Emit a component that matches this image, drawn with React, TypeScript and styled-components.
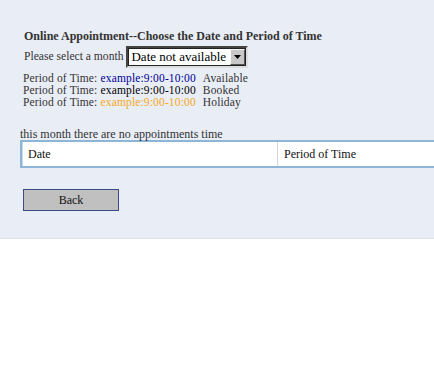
import React from "react";
import styled, { createGlobalStyle } from "styled-components";

const GlobalStyle = createGlobalStyle`
  html, body {
    margin: 0;
    padding: 0;
    background: #ffffff;
    overflow: hidden;
  }
  body {
    font-family: "Liberation Serif", "Times New Roman", serif;
    font-size: 12px;
    color: #333333;
  }
`;

type Status = "available" | "booked" | "holiday";

const LEGEND: { status: Status; label: string }[] = [
  { status: "available", label: "Available" },
  { status: "booked", label: "Booked" },
  { status: "holiday", label: "Holiday" },
];

const STATUS_COLOR: Record<Status, string> = {
  available: "#000099",
  booked: "#000000",
  holiday: "#f4a81c",
};

const Panel = styled.div`
  background: #e9edf5;
  border-bottom: 1px solid #dde2ea;
  padding: 29px 0 27px 20px;
  overflow: hidden;
`;

const Title = styled.h1`
  margin: 0 0 0 4px;
  font-size: 12px;
  line-height: 14px;
  font-weight: bold;
  color: #333333;
`;

const MonthRow = styled.div`
  display: flex;
  align-items: center;
  gap: 3px;
  margin: 3px 0 0 4px;
  line-height: 14px;
  font-size: 11.6px;
`;

const SelectBox = styled.div`
  display: flex;
  align-items: center;
  box-sizing: border-box;
  width: 122px;
  height: 22px;
  background: #ffffff;
  border: 2px solid;
  border-color: #444444 #dddddd #dddddd #444444;
  outline: 1px solid #222222;
  outline-offset: -3px;
`;

const SelectText = styled.span`
  flex: 1;
  padding-left: 3px;
  font-size: 13px;
  color: #000000;
  white-space: nowrap;
  overflow: hidden;
`;

const ArrowButton = styled.span`
  display: flex;
  align-items: center;
  justify-content: center;
  box-sizing: border-box;
  width: 15px;
  height: 16px;
  margin-right: 1px;
  background: #c8c8c8;
  border: 1px solid;
  border-color: #f4f4f4 #555555 #555555 #f4f4f4;
`;

const Legend = styled.div`
  margin: 4px 0 0 3px;
  font-size: 11.5px;
  line-height: 12px;
  letter-spacing: 0.15px;
`;

const LegendLine = styled.div`
  height: 12px;
  white-space: nowrap;
`;

const Example = styled.span<{ $status: Status }>`
  display: inline-block;
  line-height: 12px;
  color: ${(p) => STATUS_COLOR[p.$status]};
  margin-right: 7px;
`;

const Notice = styled.div`
  margin-top: 20px;
  line-height: 12px;
`;

const Table = styled.table`
  width: 514px;
  border-collapse: separate;
  border-spacing: 0;
  background: #ffffff;
  border: 2px solid #8db5d6;
`;

const Cell = styled.td<{ $first?: boolean }>`
  width: 50%;
  height: 24px;
  padding: 0 6px;
  font-size: 12px;
  color: #111111;
  border-left: ${(p) => (p.$first ? "none" : "1px solid #d8d8d8")};
  box-shadow: ${(p) => (p.$first ? "inset 1px 0 0 #c8d8e6" : "none")};
`;

const BackButton = styled.button`
  display: block;
  width: 96px;
  height: 22px;
  margin: 21px 0 0 3px;
  padding: 0;
  background: #c0c0c0;
  border: 1px solid #3d4a86;
  font-family: "Liberation Serif", "Times New Roman", serif;
  font-size: 12px;
  color: #111111;
`;

const App: React.FC = () => (
  <>
    <GlobalStyle />
    <Panel>
      <Title>Online Appointment--Choose the Date and Period of Time</Title>

      <MonthRow>
        <span>Please select a month</span>
        <SelectBox>
          <SelectText>Date not available</SelectText>
          <ArrowButton>
            <svg width="7" height="4" viewBox="0 0 7 4" aria-hidden="true">
              <polygon points="0,0 7,0 3.5,4" fill="#000" />
            </svg>
          </ArrowButton>
        </SelectBox>
      </MonthRow>

      <Legend>
        {LEGEND.map((l) => (
          <LegendLine key={l.status}>
            Period of Time: <Example $status={l.status}>example:9:00-10:00</Example>
            {l.label}
          </LegendLine>
        ))}
      </Legend>

      <Notice>this month there are no appointments time</Notice>
      <Table>
        <tbody>
          <tr>
            <Cell $first>Date</Cell>
            <Cell>Period of Time</Cell>
          </tr>
        </tbody>
      </Table>

      <BackButton type="button">Back</BackButton>
    </Panel>
  </>
);

export default App;
